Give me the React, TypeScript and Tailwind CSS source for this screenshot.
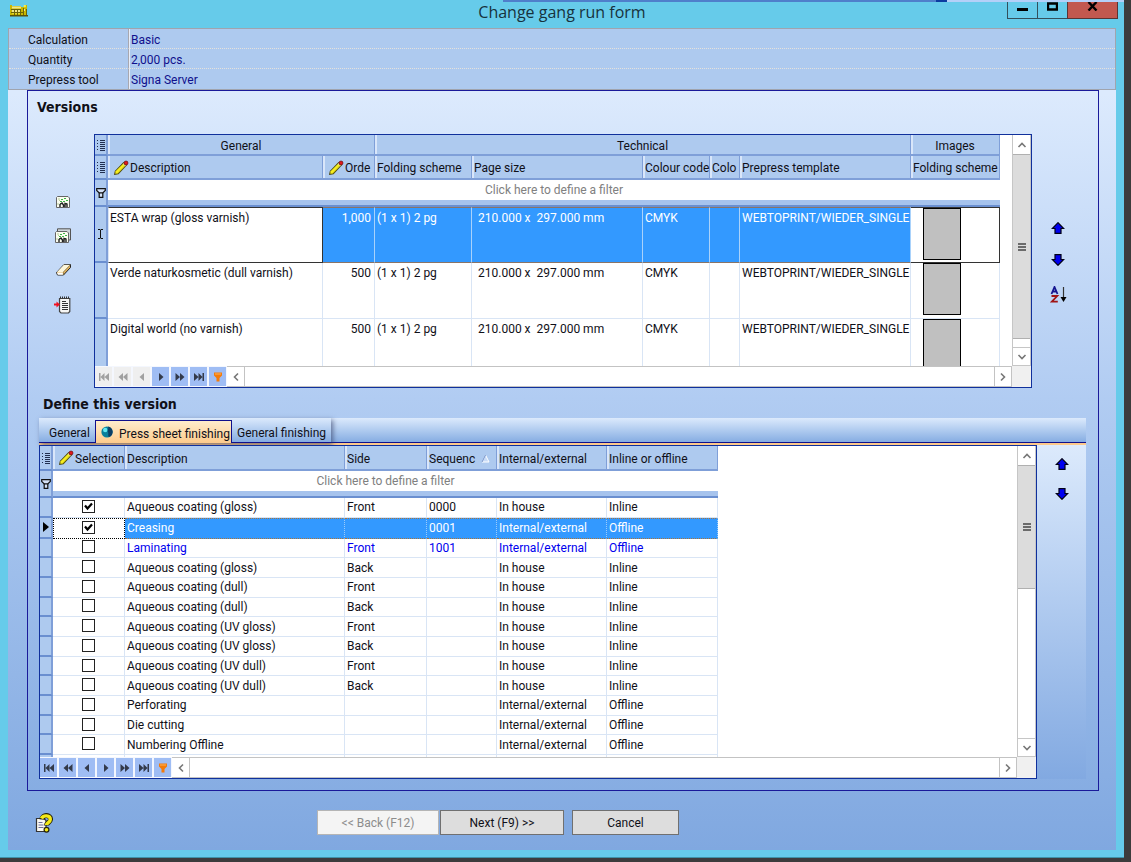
import React, { useState } from 'react';
import clsx from 'clsx';

const JOB_INFO = [
  { label: 'Calculation', value: 'Basic' },
  { label: 'Quantity', value: '2,000 pcs.' },
  { label: 'Prepress tool', value: 'Signa Server' },
];

const VERSION_COLUMNS = [
  { title: 'Description', editable: true },
  { title: 'Orde', editable: true },
  { title: 'Folding scheme' },
  { title: 'Page size' },
  { title: 'Colour code' },
  { title: 'Colo' },
  { title: 'Prepress template' },
  { title: 'Folding scheme' },
];

const VERSIONS = [
  { name: 'ESTA wrap (gloss varnish)', order: '1,000' },
  { name: 'Verde naturkosmetic (dull varnish)', order: '500' },
  { name: 'Digital world (no varnish)', order: '500' },
];

const FINISHINGS = [
  { name: 'Aqueous coating (gloss)', side: 'Front', seq: '0000', where: 'In house', line: 'Inline' },
  { name: 'Creasing', side: '', seq: '0001', where: 'Internal/external', line: 'Offline' },
  { name: 'Laminating', side: 'Front', seq: '1001', where: 'Internal/external', line: 'Offline' },
  { name: 'Aqueous coating (gloss)', side: 'Back', seq: '', where: 'In house', line: 'Inline' },
  { name: 'Aqueous coating (dull)', side: 'Front', seq: '', where: 'In house', line: 'Inline' },
  { name: 'Aqueous coating (dull)', side: 'Back', seq: '', where: 'In house', line: 'Inline' },
  { name: 'Aqueous coating (UV gloss)', side: 'Front', seq: '', where: 'In house', line: 'Inline' },
  { name: 'Aqueous coating (UV gloss)', side: 'Back', seq: '', where: 'In house', line: 'Inline' },
  { name: 'Aqueous coating (UV dull)', side: 'Front', seq: '', where: 'In house', line: 'Inline' },
  { name: 'Aqueous coating (UV dull)', side: 'Back', seq: '', where: 'In house', line: 'Inline' },
  { name: 'Perforating', side: '', seq: '', where: 'Internal/external', line: 'Offline' },
  { name: 'Die cutting', side: '', seq: '', where: 'Internal/external', line: 'Offline' },
  { name: 'Numbering Offline', side: '', seq: '', where: 'Internal/external', line: 'Offline' },
];

const TABS = ['General', 'Press sheet finishing', 'General finishing'];

const HEAD_CELL = 'p-0 pt-[2px] text-left font-normal bg-[#aecaef] border-b-2 border-b-[#7f9fd8] border-r border-r-[#7f9fd8] shadow-[inset_2px_0_0_#d9e6fa]';
const MARK_CELL = 'p-0 bg-[#aecaef] border-r-2 border-r-[#7f9fd8] border-b-2 border-b-[#6a8fd0]';
const BODY_CELL = 'p-0 pl-[2px] border-r border-b border-[#d9e5f5] whitespace-nowrap overflow-hidden';

/* ---------- icons ---------- */

const PencilIcon = () => (
  <svg className="-mt-px shrink-0" width="16" height="16" viewBox="0 0 16 16">
    <path d="M1 15l.8-4L10.500 2l3.700 3L5.500 14.200z" fill="#4a460a" />
    <path d="M2.200 13.800l.4-2.500L10.800 3l2.300 1.900L5 13.400z" fill="#f7ee20" />
    <path d="M4.600 13.400l8.300-8.700" stroke="#b3ab14" strokeWidth=".7" />
    <path d="M10 3.600l2.600 2.100" stroke="#d4d4d4" strokeWidth="1" />
    <circle cx="13" cy="3" r="2" fill="#e0181c" stroke="#500" strokeWidth=".6" />
  </svg>
);

const ListIcon = () => (
  <svg className="mx-auto block" width="8" height="12" viewBox="0 0 8 12">
    <path d="M0 1.500h1M0 4.500h1M0 7.500h1M0 10.500h1M3 1.500h5M3 3.500h5M3 5.500h5M3 7.500h5M3 9.500h5M3 11.500h5" stroke="#222f50" />
  </svg>
);

const FilterIcon = () => (
  <svg className="mx-auto block" width="10" height="12" viewBox="0 0 10 12">
    <path d="M.7 1.700h8.600v1.800L6.800 6H3.200L.7 3.500z" fill="#d4e1f6" stroke="#111" strokeWidth="1.200" />
    <path d="M3.200 6h3.600v4.300H3.200z" fill="#d4e1f6" stroke="#111" strokeWidth="1.200" />
  </svg>
);

const ArrowIcon = ({ down = false }: { down?: boolean }) => (
  <svg className={clsx('block', down && 'rotate-180')} width="14" height="12" viewBox="0 0 14 12">
    <path d="M7 .7L12.600 6.500H10v4.800H4V6.500H1.400z" fill="#0000f0" stroke="#000018" strokeWidth="1.200" />
  </svg>
);

const SortIcon = () => (
  <svg className="block" width="17" height="17" viewBox="0 0 17 17">
    <path d="M1.500 8L4.500 1 7.500 8M2.500 5.500h4" fill="none" stroke="#151590" strokeWidth="1.800" />
    <path d="M1.500 10h5.700L1.800 15.600h6" fill="none" stroke="#a01414" strokeWidth="1.800" />
    <path d="M13.500 1v11" stroke="#333" strokeWidth="1.200" />
    <path d="M10.500 11h6l-3 5z" fill="#000" />
  </svg>
);

const Sheet = () => (
  <>
    <path d="M2.500 1.500H13l1.500 1.500v9.500h-13v-10z" fill="#fbfdf0" stroke="#666" />
    <path d="M3 10V8M4.500 6V5M3 4h2" fill="none" stroke="#b9cf9c" />
    <path d="M6 4h2v1H6zM9 3h2v1H9zM11 5h2v1h-2zM5 6h2v1H5zM8 6h2v1H8zM11 8h1v1h-1zM5 8h1v1H5z" fill="#3db545" />
    <path d="M5 12V9.500l2-1.500 1.500 2V12M10 12V8.500l2 .5V12" fill="none" stroke="#222" strokeWidth="1.400" />
  </>
);

const NewVersionIcon = () => (
  <svg className="block" width="16" height="16" viewBox="0 0 16 16"><g transform="translate(0 1)"><Sheet /></g></svg>
);

const CopyVersionIcon = () => (
  <svg className="block" width="18" height="16" viewBox="0 0 18 16">
    <path d="M3.500 3V.8h13V12h-2" fill="#cfd6da" stroke="#555" />
    <g transform="translate(0 2)"><Sheet /></g>
  </svg>
);

const EraserIcon = () => (
  <svg className="block" width="17" height="16" viewBox="0 0 17 16">
    <path d="M1.500 10.500L9 2.500h6.500v3L8.500 13H2.500z" fill="#e5b45c" stroke="#222" />
    <path d="M2 10L9 2.700h6.300L8.500 10z" fill="#fdf6da" />
    <path d="M2 10.500h6v2.200H2.800z" fill="#fff" />
    <path d="M8.400 10.300V13M8.400 10L15.200 3" stroke="#7a6a40" strokeWidth=".8" />
  </svg>
);

const NotesIcon = () => (
  <svg className="block" width="18" height="18" viewBox="0 0 18 18">
    <path d="M5.500 2.500h10.300v13L14.500 17H7l-1.500-1.500z" fill="#f7f7f5" stroke="#444" strokeWidth="1.200" />
    <path d="M6 1.500h10" stroke="#333" strokeWidth="2" strokeDasharray="1 1" />
    <path d="M8 5.500h4M8 7.500h6M8 9.500h6M8 11.500h6M8 13.500h6" stroke="#333" />
    <path d="M0 8.500h3" stroke="#f01020" strokeWidth="2" />
    <path d="M2.500 5.500l3.500 3-3.500 3z" fill="#f01020" />
  </svg>
);

const AppIcon = () => (
  <svg className="block" width="18" height="12" viewBox="0 0 18 12">
    <path d="M0 0h2v1h9v1h3V0h3v11H0z" fill="#c9b800" />
    <path d="M0 10h18v1.500H0z" fill="#5a5208" />
    <path d="M2 1.500h9v2H2zM2 5h2v2H2zM5 5h2v2H5zM8 5h2v2H8zM14 4h1v2h-1z" fill="#efe68a" />
    <path d="M4.500 4v6M7.500 4v6M10.500 4v6M13.500 3v7M16.500 4v6M1 4.500h10M1 7.500h12" stroke="#6d6508" />
    <path d="M14 0h1.500v2H14zM2 8.500h2M5 8.500h2M8 8.500h2" fill="#f6ee52" stroke="#f6ee52" strokeWidth=".6" />
  </svg>
);

const HelpIcon = () => (
  <svg className="block" width="18" height="20" viewBox="0 0 18 20">
    <path d="M1.500 5.500H9l2 2v11H1.500z" fill="#fbfaf2" stroke="#333" strokeWidth="1.200" />
    <path d="M3.500 9.500h4M3.500 12h5M3.500 14.500h5" stroke="#6c6c9a" />
    <path d="M7 6.500C7.300 1 15.800 1.300 15.500 6.500c-.3 3-4 3-4 6" fill="none" stroke="#26220a" strokeWidth="5" />
    <path d="M6.500 5.500C8 1.800 15.500 2 15.300 6.500c0 3-3.800 3-3.800 5.500" fill="none" stroke="#f4ea18" strokeWidth="3.400" />
    <circle cx="11.500" cy="16.800" r="2.400" fill="#f4ea18" stroke="#26220a" strokeWidth="1.200" />
  </svg>
);

const GlobeIcon = () => (
  <svg className="block" width="12" height="12" viewBox="0 0 12 12">
    <circle cx="6" cy="6" r="5.600" fill="#087f9c" />
    <path d="M7 .5a5.600 5.600 0 012 10.300C6 11 8 8 7 6s1-3 0-5.500z" fill="#0a3f66" />
    <circle cx="4.200" cy="4" r="2.200" fill="#5fe6f0" />
  </svg>
);

const Chevron = ({ className }: { className?: string }) => (
  <svg className={clsx('block', className)} width="10" height="10" viewBox="0 0 10 10">
    <path d="M1.500 7L5 3.500 8.500 7" fill="none" stroke="#777" strokeWidth="1.600" />
  </svg>
);

/* ---------- shared grid parts ---------- */

const NAV_ICONS = [
  { label: 'First', path: 'M1 1h1.500v8H1zM6.500 1v8L2.500 5zM11 1v8L6.500 5z' },
  { label: 'Previous page', path: 'M6 1v8L1.500 5zM10.500 1v8L6 5z' },
  { label: 'Previous', path: 'M8 1v8L3.500 5z' },
  { label: 'Next', path: 'M4 1v8L8.500 5z' },
  { label: 'Next page', path: 'M1.500 1v8L6 5zM6 1v8l4.500-4z' },
  { label: 'Last', path: 'M1 1v8l4.500-4zM5.500 1v8l4-4zM9.500 1H11v8H9.500z' },
];

const NavBar = ({ disabledCount = 0 }: { disabledCount?: number }) => (
  <div className="flex h-[21px] bg-[#f0f0f0]">
    <div className="flex items-center gap-[2px] bg-[#f4f7fe] pr-px">
      {NAV_ICONS.map((icon, i) => (
        <button
          key={icon.label}
          aria-label={icon.label}
          disabled={i < disabledCount}
          className={clsx(
            'flex h-[19px] w-[17px] items-center justify-center',
            i < disabledCount ? 'bg-[#efefef] text-[#a0a0a0]' : 'bg-[#9fbdf4] text-[#333a4a]'
          )}
        >
          <svg width="12" height="10" viewBox="0 0 12 10"><path d={icon.path} fill="currentColor" /></svg>
        </button>
      ))}
      <button aria-label="Filter" className="flex h-[19px] w-[17px] items-center justify-center bg-[#9fbdf4]">
        <svg width="10" height="10" viewBox="0 0 10 10">
          <path d="M1 .5h8v3L6.500 6v3.500h-3V6L1 3.500z" fill="#f47b0a" />
          <path d="M2 1.500h6v1H2z" fill="#fdb45c" />
        </svg>
      </button>
    </div>
    <div className="flex flex-1 border-y border-[#c3c3c3] bg-white">
      <button aria-label="Scroll left" className="flex w-[18px] items-center justify-center border-r border-[#c3c3c3]">
        <Chevron className="-rotate-90" />
      </button>
      <div className="flex-1" />
      <button aria-label="Scroll right" className="flex w-[18px] items-center justify-center border-x border-[#c3c3c3]">
        <Chevron className="rotate-90" />
      </button>
    </div>
    <div className="w-[19px]" />
  </div>
);

const VerticalScroll = ({ thumb }: { thumb: string }) => (
  <div className="flex w-[19px] flex-col border-x border-[#c6c6c6] bg-white">
    <button aria-label="Scroll up" className="flex h-[19px] items-center justify-center">
      <Chevron />
    </button>
    <div className={clsx('flex flex-col items-center justify-center gap-px border-y border-[#b0b0b0] bg-[#dcdcdc]', thumb)}>
      <div className="h-[2px] w-2 bg-[#6b6b6b]" />
      <div className="h-[2px] w-2 bg-[#6b6b6b]" />
      <div className="h-[2px] w-2 bg-[#6b6b6b]" />
    </div>
    <div className="flex-1" />
    <button aria-label="Scroll down" className="flex h-[19px] items-center justify-center border-y border-[#c6c6c6]">
      <Chevron className="rotate-180" />
    </button>
  </div>
);

const FilterRow = ({ span }: { span: number }) => (
  <tr>
    <th className={clsx(MARK_CELL, 'h-[27px]')}><FilterIcon /></th>
    <th colSpan={span} className="bg-white p-0 font-normal text-[#808080]">
      <button className="block w-full leading-5">Click here to define a filter</button>
      <div className="h-[7px] border-b-2 border-[#6a8fd0] bg-[#a6c3ed]" />
    </th>
  </tr>
);

const HeaderLabel = ({ title, editable }: { title: string; editable?: boolean }) => (
  <div className={clsx('flex items-center gap-px whitespace-nowrap', editable ? 'pl-[5px]' : 'pl-[2px]')}>
    {editable && <PencilIcon />}
    <span>{title}</span>
  </div>
);

/* ---------- versions ---------- */

const VersionsGrid = () => (
  <div className="min-w-0 flex-1 border border-[#10309c] bg-white">
    <div className="flex h-[231px]">
      <div className="min-w-0 flex-1 overflow-hidden">
        <table className="w-[905px] table-fixed border-separate border-spacing-0">
          <colgroup>
            <col className="w-[13px]" />
            <col className="w-[215px]" />
            <col className="w-[52px]" />
            <col className="w-[97px]" />
            <col className="w-[171px]" />
            <col className="w-[67px]" />
            <col className="w-[30px]" />
            <col className="w-[171px]" />
            <col className="w-[89px]" />
          </colgroup>
          <thead>
            <tr className="h-[21px]">
              <th className={MARK_CELL}><ListIcon /></th>
              <th colSpan={2} className={HEAD_CELL}><div className="text-center">General</div></th>
              <th colSpan={5} className={HEAD_CELL}><div className="text-center">Technical</div></th>
              <th className={HEAD_CELL}><div className="text-center">Images</div></th>
            </tr>
            <tr className="h-6">
              <th className={MARK_CELL}><ListIcon /></th>
              {VERSION_COLUMNS.map((col, i) => (
                <th key={i} className={HEAD_CELL}><HeaderLabel {...col} /></th>
              ))}
            </tr>
            <FilterRow span={8} />
          </thead>
          <tbody>
            {VERSIONS.map((v, i) => {
              const active = i === 0;
              const cell = clsx(BODY_CELL, 'pt-[2px]', active && 'border-y border-y-[#8a7466] border-r-[#a9d2fb] bg-[#3399ff] text-white');
              const edge = clsx(BODY_CELL, active && 'border-y border-y-[#333] border-r-[#333]');
              return (
                <tr key={v.name} className="h-14 align-top">
                  <td className={clsx(MARK_CELL, 'align-middle')}>
                    {active && (
                      <svg className="mx-auto block" width="7" height="12" viewBox="0 0 7 12">
                        <path d="M1 1.500h2l.5.5.5-.5h2M3.500 2v8M1 10.500h2l.5-.5.5.5h2" fill="none" stroke="#111" />
                      </svg>
                    )}
                  </td>
                  <td className={clsx(edge, 'pt-[2px]', active && 'border-l pl-px')}>{v.name}</td>
                  <td className={clsx(cell, 'pr-[3px] text-right')}>{v.order}</td>
                  <td className={cell}>(1 x 1) 2 pg</td>
                  <td className={clsx(cell, 'pl-[6px] whitespace-pre')}>{'210.000 x  297.000 mm'}</td>
                  <td className={cell}>CMYK</td>
                  <td className={cell} />
                  <td className={cell}>WEBTOPRINT/WIEDER_SINGLE</td>
                  <td className={edge}>
                    <div className="ml-[10px] h-[52px] w-[38px] border border-black bg-[#c0c0c0]" />
                  </td>
                </tr>
              );
            })}
          </tbody>
        </table>
      </div>
      <VerticalScroll thumb="h-[185px]" />
    </div>
    <NavBar disabledCount={3} />
  </div>
);

const SECTION_TITLE = "pt-2 font-['DejaVu_Sans_Condensed',sans-serif] text-[14px] leading-4 font-bold";

const VersionsSection = () => (
  <section>
    <h2 className={clsx(SECTION_TITLE, 'pl-[9px]')}>Versions</h2>
    <div className="mt-[19px] flex">
      <div className="flex w-[66px] flex-col items-center gap-[18px] pt-[60px] pl-1">
        <button aria-label="New version"><NewVersionIcon /></button>
        <button aria-label="Copy version"><CopyVersionIcon /></button>
        <button aria-label="Delete version"><EraserIcon /></button>
        <button aria-label="Import versions"><NotesIcon /></button>
      </div>
      <VersionsGrid />
      <div className="mr-[14px] flex w-[52px] flex-col items-center gap-5 pt-[88px]">
        <button aria-label="Move up"><ArrowIcon /></button>
        <button aria-label="Move down"><ArrowIcon down /></button>
        <button aria-label="Sort"><SortIcon /></button>
      </div>
    </div>
  </section>
);

/* ---------- finishing ---------- */

const Tabs = () => {
  const [tab, setTab] = useState('Press sheet finishing');

  return (
    <div className="border-b-2 border-[#fdc98a]">
      <div className="flex h-[25px] border-b border-[#10108c] bg-gradient-to-b from-[#dceafc] to-[#86ade2]">
        <div role="tablist" className="flex h-[25px] items-stretch pt-[2px] shadow-[2px_2px_5px_rgba(40,50,90,0.6)]">
          {TABS.map(name => (
            <button
              key={name}
              role="tab"
              aria-selected={tab === name}
              onClick={() => setTab(name)}
              className={clsx(
                'flex items-center gap-[6px] pt-1 leading-4',
                tab === name
                  ? 'w-[137px] border border-b-0 border-[#10108c] bg-gradient-to-b from-[#feedcc] to-[#fdcb8c] pl-[5px]'
                  : 'border-b border-[#10108c]',
                name === 'General' && 'w-14 pl-[10px]',
                name === 'General finishing' && 'w-[99px] pl-[5px]'
              )}
            >
              {tab === name && <span className="-mt-1"><GlobeIcon /></span>}
              <span className="whitespace-nowrap">{name}</span>
            </button>
          ))}
        </div>
      </div>
    </div>
  );
};

const FinishingGrid = () => {
  const [picked, setPicked] = useState([0, 1]);

  const toggle = (index: number) => {
    setPicked(current => current.includes(index) ? current.filter(i => i !== index) : [...current, index]);
  };

  return (
    <div className="min-w-0 flex-1 border border-[#10309c] bg-white">
      <div className="flex h-[311px]">
        <div className="min-w-0 flex-1 overflow-hidden">
          {/* body rows share whatever height is left under the header */}
          <table className="h-[330px] w-[678px] table-fixed border-separate border-spacing-0">
            <colgroup>
              <col className="w-[13px]" />
              <col className="w-[72px]" />
              <col className="w-[220px]" />
              <col className="w-[82px]" />
              <col className="w-[70px]" />
              <col className="w-[110px]" />
              <col className="w-[111px]" />
            </colgroup>
            <thead>
              <tr className="h-[25px]">
                <th className={MARK_CELL}><ListIcon /></th>
                <th className={HEAD_CELL}><HeaderLabel title="Selection" editable /></th>
                <th className={HEAD_CELL}><HeaderLabel title="Description" /></th>
                <th className={HEAD_CELL}><HeaderLabel title="Side" /></th>
                <th className={HEAD_CELL}>
                  <div className="flex items-center justify-between pr-[6px]">
                    <HeaderLabel title="Sequenc" />
                    <svg width="9" height="9" viewBox="0 0 9 9">
                      <path d="M4.500 1L8 8H1z" fill="#c9dcf7" stroke="#fff" />
                      <path d="M4.500 1L1 8" stroke="#6f8fc9" />
                    </svg>
                  </div>
                </th>
                <th className={HEAD_CELL}><HeaderLabel title="Internal/external" /></th>
                <th className={HEAD_CELL}><HeaderLabel title="Inline or offline" /></th>
              </tr>
              <FilterRow span={6} />
            </thead>
            <tbody>
              {FINISHINGS.map((f, i) => {
                const active = f.name === 'Creasing';
                const cell = clsx(
                  BODY_CELL,
                  active && 'border-y border-y-[#a8743c] border-dotted border-r-[#9ccbf9] bg-[#3399ff] text-white',
                  f.name === 'Laminating' && 'text-[#0000ee]'
                );
                return (
                  <tr key={i}>
                    <td className={MARK_CELL}>
                      {active && (
                        <svg className="mx-auto block" width="6" height="10" viewBox="0 0 6 10"><path d="M0 0l6 5-6 5z" /></svg>
                      )}
                    </td>
                    <td className={clsx(BODY_CELL, 'pr-[3px]', active && 'border border-dotted border-black')}>
                      <label className="mx-auto -mt-[2px] flex w-[13px]">
                        <input
                          type="checkbox"
                          aria-label={f.name}
                          checked={picked.includes(i)}
                          onChange={() => toggle(i)}
                          className="peer size-[13px] shrink-0 appearance-none border border-[#222] bg-white"
                        />
                        <svg className="-ml-[13px] hidden shrink-0 peer-checked:block" width="13" height="13" viewBox="0 0 13 13">
                          <path d="M3 5.500l2.500 3L10 3.500" fill="none" stroke="#000" strokeWidth="2.200" />
                        </svg>
                      </label>
                    </td>
                    <td className={cell}>{f.name}</td>
                    <td className={cell}>{f.side}</td>
                    <td className={cell}>{f.seq}</td>
                    <td className={cell}>{f.where}</td>
                    <td className={cell}>{f.line}</td>
                  </tr>
                );
              })}
              <tr>
                <td className={MARK_CELL}>&nbsp;</td>
                {TABS.concat(TABS).map((_, i) => <td key={i} className={BODY_CELL} />)}
              </tr>
            </tbody>
          </table>
        </div>
        <VerticalScroll thumb="h-[124px]" />
      </div>
      <NavBar />
    </div>
  );
};

const FinishingSection = () => (
  <section>
    <h2 className={clsx(SECTION_TITLE, 'pl-[15px]')}>Define this version</h2>
    <div className="mt-[6px] mr-3 ml-[11px]">
      <Tabs />
      <div className="flex bg-gradient-to-b from-[#dceafc] to-[#82a9e1]">
        <FinishingGrid />
        <div className="flex w-[49px] flex-col items-center gap-[18px] pt-[13px]">
          <button aria-label="Move up"><ArrowIcon /></button>
          <button aria-label="Move down"><ArrowIcon down /></button>
        </div>
      </div>
    </div>
  </section>
);

/* ---------- window ---------- */

const TitleBar = () => (
  <header className="grid h-[28px] grid-cols-[120px_1fr_120px]">
    <div className="pt-[5px] pl-[10px]"><AppIcon /></div>
    <h1 className="text-center font-['Open_Sans',sans-serif] text-[16px] leading-6 text-[#17323c]">Change gang run form</h1>
    <div className="flex h-[19px] justify-end pr-[6px]">
      <button aria-label="Minimize" className="flex w-[31px] justify-center border border-t-0 border-[#33505c] pt-2">
        <svg width="11" height="3" viewBox="0 0 11 3"><path d="M0 0h11v3H0z" /></svg>
      </button>
      <button aria-label="Maximize" className="flex w-[29px] justify-center border-b border-[#33505c] pt-[2px]">
        <svg width="11" height="9" viewBox="0 0 11 9"><path d="M1 1.500h9v6H1z" fill="none" stroke="#000" strokeWidth="2.400" /></svg>
      </button>
      <button aria-label="Close" className="flex w-[51px] justify-center border border-t-0 border-[#5a3434] bg-[#c2584f] pt-[2px]">
        <svg width="11" height="9" viewBox="0 0 11 9"><path d="M1.500 0L9.500 8.500M9.500 0L1.500 8.500" stroke="#000" strokeWidth="2.400" /></svg>
      </button>
    </div>
  </header>
);

const JobInfo = () => (
  <table className="w-full border-separate border-spacing-0 border border-[#a0a4ae] bg-[#aecaef]">
    <tbody>
      {JOB_INFO.map((row, i) => (
        <tr key={row.label} className="h-5">
          <th className={clsx('w-[120px] border-r border-r-[#a8a8b0] p-0 pt-[2px] pl-[19px] text-left font-normal', i < 2 && 'border-b border-b-[#e6e2dc] [border-bottom-style:dotted]')}>
            {row.label}
          </th>
          <td className={clsx('border-l border-l-[#e8eefa] p-0 pt-[2px] pl-px text-[#10108c]', i < 2 && 'border-b border-b-[#e6e2dc] [border-bottom-style:dotted]')}>
            {row.value}
          </td>
        </tr>
      ))}
    </tbody>
  </table>
);

const BUTTON = 'h-[25px] border leading-4';

export default function App() {
  return (
    <div className="min-h-screen bg-[#3c3c3c] pr-[7px] font-['Roboto',sans-serif] text-[12px] leading-4 text-[#101018]">
      <div className="relative border-b border-[#3f93a8] bg-[#66cbea] pb-[7px]">
        {/* edge of the window lying behind */}
        <div className="absolute top-0 right-0 flex h-[2px] w-[621px]">
          <div className="flex-1 bg-[#4f7fcb]" />
          <div className="w-[11px] bg-[#0c3ca0]" />
          <div className="w-[177px] bg-[#b4d0f8]" />
        </div>
        <TitleBar />
        <main className="mx-2 bg-[linear-gradient(to_bottom,#dceafd_0%,#dceafd_8%,#b1ccf2_45%,#80a8e0_100%)]">
          <JobInfo />
          <div className="mr-[17px] ml-[19px] border border-[#1a1a9a] pb-[11px]">
            <VersionsSection />
            <FinishingSection />
          </div>
          <footer className="flex h-[59px] items-center pt-1">
            <div className="w-[309px] pt-1 pl-[27px]">
              <button aria-label="Help"><HelpIcon /></button>
            </div>
            <button disabled className={clsx(BUTTON, 'w-[122px] border-[#b5b5b5] bg-[#f4f4f4] text-[#8c8c8c]')}>&lt;&lt; Back (F12)</button>
            <button className={clsx(BUTTON, 'ml-px w-[124px] border-[#707070] bg-[#dddddd]')}>Next (F9) &gt;&gt;</button>
            <button className={clsx(BUTTON, 'ml-2 w-[107px] border-[#707070] bg-[#dddddd]')}>Cancel</button>
          </footer>
        </main>
      </div>
    </div>
  );
}
